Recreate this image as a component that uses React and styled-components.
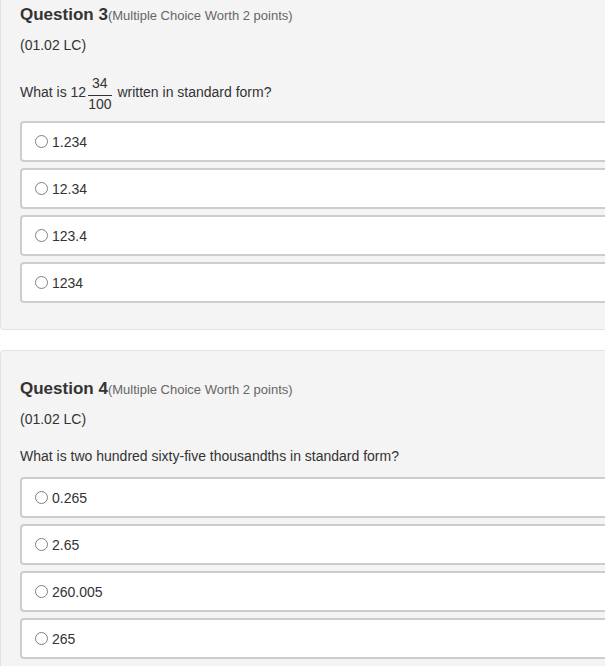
import React from "react";
import styled, { createGlobalStyle } from "styled-components";

const Global = createGlobalStyle`
  html, body { margin: 0; padding: 0; background: #ffffff; overflow: hidden; }
  body { font-family: "Liberation Sans", Arial, sans-serif; color: #333333; }
`;

const Page = styled.div`
  margin-top: -24px;
  width: 660px;
  display: flex;
  flex-direction: column;
  gap: 20px;
`;

const Card = styled.section`
  background: #f4f4f4;
  border: 1px solid #e2e2e2;
  border-radius: 4px;
  padding: 28px 0 26px 19px;
  display: flex;
  flex-direction: column;
`;

const TitleRow = styled.h2`
  margin: 0;
  font-size: 17px;
  line-height: 20px;
  font-weight: bold;
  color: #333333;
`;

const Worth = styled.span`
  font-size: 13px;
  font-weight: normal;
  color: #666666;
`;

const Code = styled.div`
  margin-top: 9px;
  font-size: 14px;
  line-height: 20px;
  color: #333333;
`;

const Prompt = styled.p`
  margin: 17px 0 11px;
  font-size: 14px;
  line-height: 20px;
  color: #333333;
`;

const Frac = styled.span`
  display: inline-flex;
  flex-direction: column;
  align-items: stretch;
  text-align: center;
  vertical-align: 8.5px;
  margin: 5px 2px 0 2px;
  font-size: 14px;
  line-height: 12px;
`;

const Num = styled.span`
  padding-bottom: 6px;
  border-bottom: 1px solid #333333;
`;

const Den = styled.span`
  padding-top: 2px;
`;

const Options = styled.div`
  display: flex;
  flex-direction: column;
  gap: 6px;
  padding-right: 20px;
`;

const Option = styled.label`
  box-sizing: border-box;
  height: 41px;
  background: #ffffff;
  border: 2px solid #cdcdcd;
  border-radius: 4px;
  display: flex;
  align-items: center;
  gap: 4px;
  padding-left: 13px;
  font-size: 14px;
  color: #333333;
`;

const Radio = styled.span`
  box-sizing: border-box;
  width: 13px;
  height: 13px;
  border-radius: 50%;
  border: 1px solid #808080;
  background: #ffffff;
  flex: none;
`;

const questions = [
  {
    n: 3,
    prompt: (
      <>
        What is 12
        <Frac>
          <Num>34</Num>
          <Den>100</Den>
        </Frac>
        {" "}written in standard form?
      </>
    ),
    options: ["1.234", "12.34", "123.4", "1234"],
  },
  {
    n: 4,
    prompt: "What is two hundred sixty-five thousandths in standard form?",
    options: ["0.265", "2.65", "260.005", "265"],
  },
];

export default function App() {
  return (
    <>
      <Global />
      <Page>
        {questions.map((q) => (
          <Card key={q.n}>
            <TitleRow>
              Question {q.n}
              <Worth>(Multiple Choice Worth 2 points)</Worth>
            </TitleRow>
            <Code>(01.02 LC)</Code>
            <Prompt>{q.prompt}</Prompt>
            <Options>
              {q.options.map((o) => (
                <Option key={o}>
                  <Radio />
                  {o}
                </Option>
              ))}
            </Options>
          </Card>
        ))}
      </Page>
    </>
  );
}
